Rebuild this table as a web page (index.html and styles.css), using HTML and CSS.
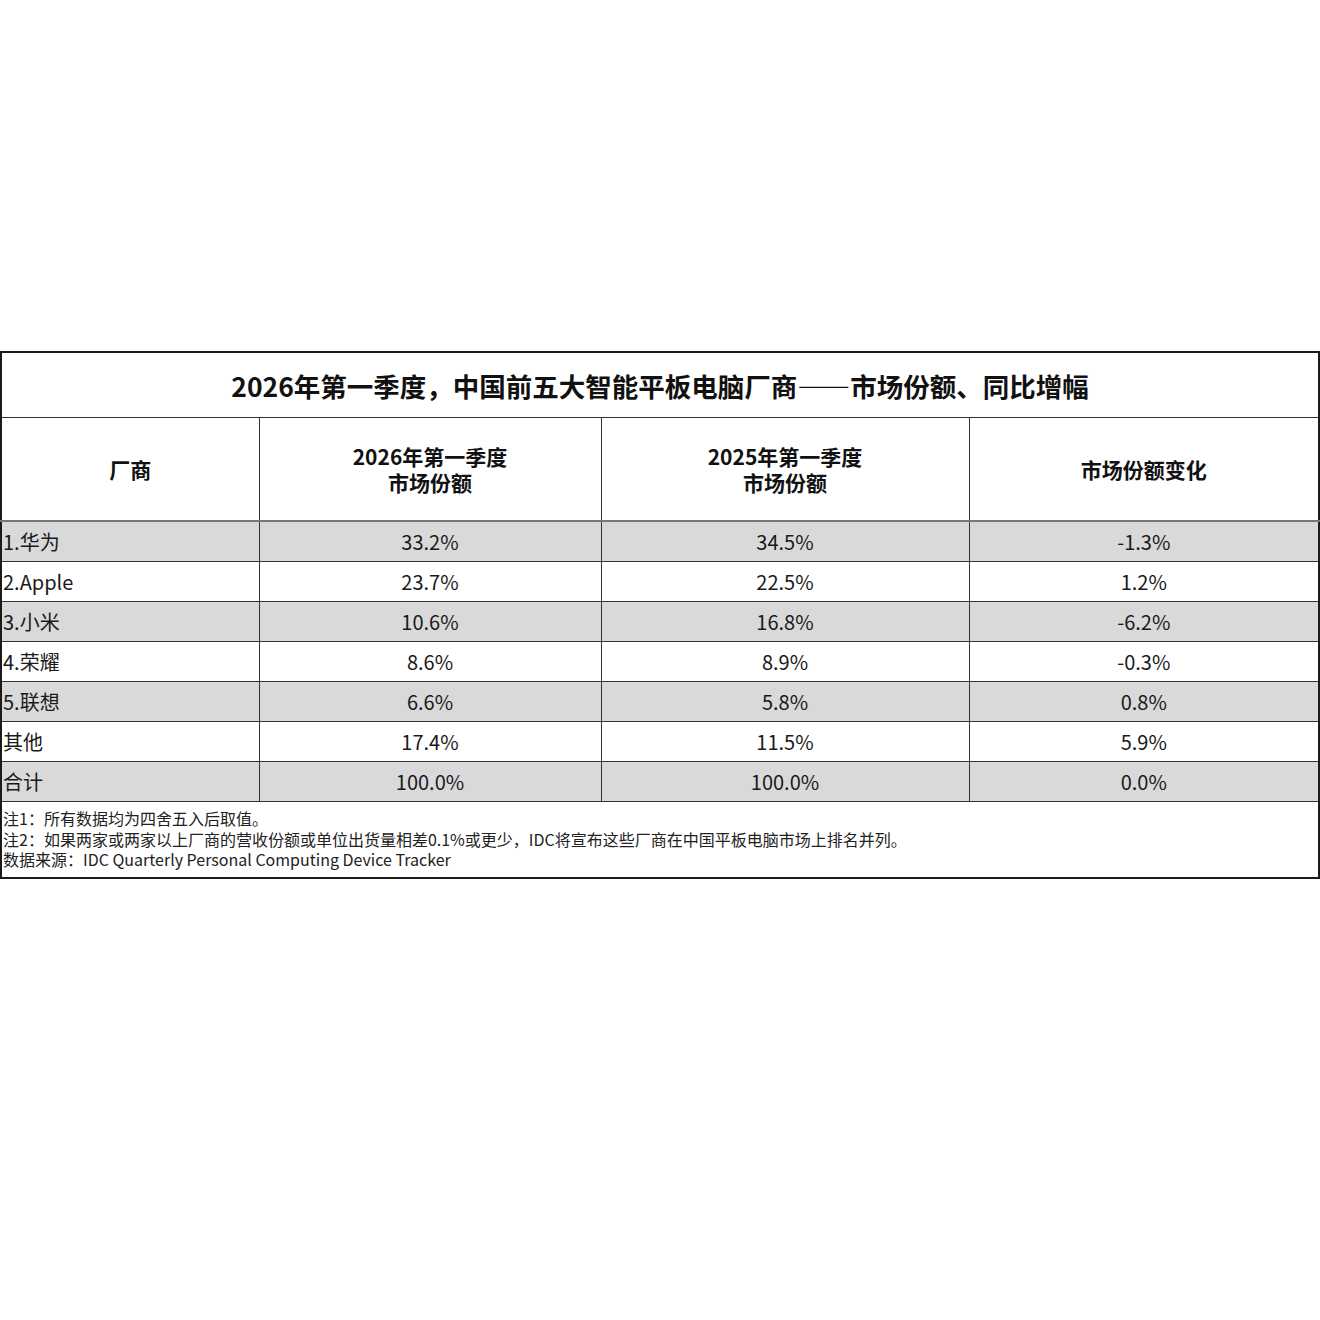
FILE: index.html
```html
<!DOCTYPE html>
<html lang="zh">
<head>
<meta charset="utf-8">
<link rel="stylesheet" href="styles.css">
</head>
<body>
<div class="page">
  <table class="share">
    <colgroup>
      <col class="c1"><col class="c2"><col class="c3"><col class="c4">
    </colgroup>
    <tr class="title-row"><th colspan="4">2026年第一季度，中国前五大智能平板电脑厂商——市场份额、同比增幅</th></tr>
    <tr class="head-row">
      <th>厂商</th>
      <th><div class="hl">2026年第一季度</div><div class="hl">市场份额</div></th>
      <th><div class="hl">2025年第一季度</div><div class="hl">市场份额</div></th>
      <th>市场份额变化</th>
    </tr>
    <tr class="row gray"><td>1.华为</td><td>33.2%</td><td>34.5%</td><td>-1.3%</td></tr>
    <tr class="row"><td>2.Apple</td><td>23.7%</td><td>22.5%</td><td>1.2%</td></tr>
    <tr class="row gray"><td>3.小米</td><td>10.6%</td><td>16.8%</td><td>-6.2%</td></tr>
    <tr class="row"><td>4.荣耀</td><td>8.6%</td><td>8.9%</td><td>-0.3%</td></tr>
    <tr class="row gray"><td>5.联想</td><td>6.6%</td><td>5.8%</td><td>0.8%</td></tr>
    <tr class="row"><td>其他</td><td>17.4%</td><td>11.5%</td><td>5.9%</td></tr>
    <tr class="row gray"><td>合计</td><td>100.0%</td><td>100.0%</td><td>0.0%</td></tr>
    <tr class="notes-row"><td colspan="4">
      <div>注1：所有数据均为四舍五入后取值。</div>
      <div>注2：如果两家或两家以上厂商的营收份额或单位出货量相差0.1%或更少，IDC将宣布这些厂商在中国平板电脑市场上排名并列。</div>
      <div>数据来源：IDC Quarterly Personal Computing Device Tracker</div>
    </td></tr>
  </table>
</div>
</body>
</html>
```

FILE: styles.css
```css
html, body {
  margin: 0;
  padding: 0;
  background: #ffffff;
}
body {
  font-family: "Noto Sans CJK SC", "Noto Sans", sans-serif;
  color: #111;
}
.page {
  padding-top: 351px;
}
.share {
  width: 1318px;
  border-collapse: collapse;
  table-layout: fixed;
  border: 2px solid #1a1a1a;
}
.c1 { width: 258px; }
.c2 { width: 342px; }
.c3 { width: 368px; }
.c4 { width: 350px; }
.share th, .share td {
  border: 1px solid #333;
  padding: 0;
}
.title-row th {
  height: 64px;
  font-size: 26.5px;
  font-weight: 700;
  text-align: center;
  padding-left: 0;
  color: #111;
}
.head-row th {
  height: 102px;
  font-size: 21px;
  font-weight: 700;
  text-align: center;
  color: #111;
  border-bottom: 2px solid #777;
}
.hl {
  line-height: 25px;
  height: 25px;
  padding-top: 1px;
}
.row td {
  height: 39px;
  font-size: 20px;
  text-align: center;
  color: #1a1a1a;
  line-height: 24px;
}
.row td:first-child {
  text-align: left;
  padding-left: 1px;
}
.row.gray td {
  background: #d9d9d9;
}
.notes-row td {
  height: 69px;
  vertical-align: top;
  font-size: 16px;
  line-height: 20.5px;
  padding: 6px 0 0 1px;
  color: #222;
}
```
